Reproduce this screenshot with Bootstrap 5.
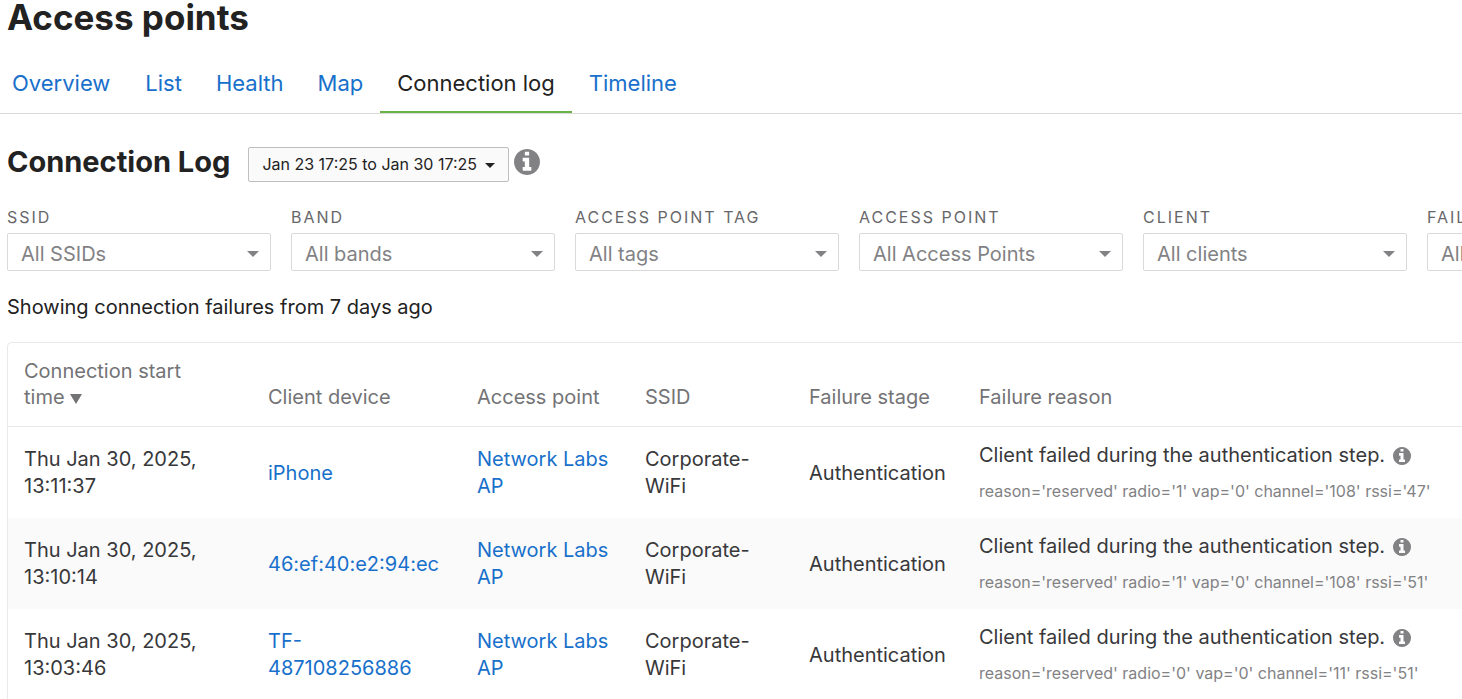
<!DOCTYPE html>
<html lang="en">
<head>
<meta charset="utf-8">
<meta name="viewport" content="width=device-width, initial-scale=1">
<title>Access points - Connection log</title>
<link href="https://cdn.jsdelivr.net/npm/bootstrap@5.3.0/dist/css/bootstrap.min.css" rel="stylesheet">
<style>
  body { font-family: Inter, "Liberation Sans", sans-serif; font-size: 20px; line-height: 27px; color: #222; overflow-x: hidden; }
  a { color: #1870cb; text-decoration: none; }
  h1 { font-size: 35px; line-height: 34px; font-weight: 700; padding: 0 7px; margin: 0 0 20px; }
  h2 { font-size: 29px; line-height: 36px; font-weight: 700; margin: 0 18px 0 0; }
  .page-tabs { border-bottom: 1px solid #d9d9d9; padding-left: 0; }
  .page-tabs .nav-link { font-size: 22px; line-height: 30px; padding: 14px 17px 13px; border-bottom: 2px solid transparent; color: #1870cb; }
  .page-tabs .nav-item:first-child .nav-link { padding-left: 12px; padding-right: 18px; }
  .page-tabs .nav-link.active { color: #222; border-bottom-color: #67b346; }
  .log-page { padding-left: 7px; }
  .log-heading { padding-top: 30px; }
  .range-btn { font-size: 16px; line-height: 24px; padding: 4px 13px 5px; margin-top: 3px; color: #222; background: #fafafa; border: 1px solid #bfbfc2; border-radius: 2px; }
  .range-btn.dropdown-toggle::after { border-width: 5px 5px 0; margin-left: 8px; vertical-align: 2px; }
  .info-icon { fill: #828285; flex: none; }
  .log-heading .info-icon { margin: 5px 0 0 5px; }
  .filter-row { gap: 20px; margin-top: 24px; }
  .filter-item { flex: 0 0 264px; }
  .filter-item label { display: block; font-size: 16px; line-height: 22px; letter-spacing: 2px; text-transform: uppercase; color: #67676a; margin-bottom: 5px; white-space: nowrap; }
  .filter-item .form-select { font-size: 20px; line-height: 26px; height: 38px; padding: 7px 36px 3px 13px; color: #828285; border: 1px solid #d9d9d9; border-radius: 2px;
    background-image: url("data:image/svg+xml,%3Csvg xmlns='http://www.w3.org/2000/svg' viewBox='0 0 12 6'%3E%3Cpath d='M0 0h12L6 6z' fill='%23828285'/%3E%3C/svg%3E"); background-size: 12px 6px; background-position: right 11px top 17px; }
  .summary { margin: 23px 0 21px; }
  .log-card { border: 1px solid #e9e9e9; border-right: 0; border-radius: 5px 0 0 0; }
  .log-table { table-layout: fixed; margin: 0; color: #38383a; }
  .log-table > :not(caption) > * > * { padding: 15px 16px; border: 0; background: transparent; color: inherit; box-shadow: none; }
  .log-table thead th { font-weight: 400; line-height: 26px; padding-bottom: 16px; color: #737376; vertical-align: bottom; border-bottom: 1px solid #e9e9e9; }
  .log-table tbody td { padding-top: 19px; padding-bottom: 18px; vertical-align: middle; }
  .log-table tbody td.reason { padding: 15px 16px; }
  .log-table tbody tr:nth-child(even) { background: #fafafa; }
  .reason small { display: block; font-size: 16px; line-height: 24px; margin-top: 10px; color: #828285; white-space: nowrap; }
  .reason .info-icon { margin-left: 8px; }
  .col-time { width: 244px; } .col-client { width: 209px; } .col-ap { width: 168px; } .col-ssid { width: 164px; } .col-stage { width: 170px; }
</style>
</head>
<body>
<svg class="d-none" aria-hidden="true"><symbol id="info" viewBox="0 128 1536 1536"><path d="M1024 1376v-160q0-14-9-23t-23-9h-96v-512q0-14-9-23t-23-9h-320q-14 0-23 9t-9 23v160q0 14 9 23t23 9h96v320h-96q-14 0-23 9t-9 23v160q0 14 9 23t23 9h448q14 0 23-9t9-23zm-128-896v-160q0-14-9-23t-23-9h-192q-14 0-23 9t-9 23v160q0 14 9 23t23 9h192q14 0 23-9t9-23zm640 416q0 209-103 385.5t-279.5 279.5-385.5 103-385.5-103-279.5-279.5-103-385.5 103-385.5 279.5-279.5 385.5-103 385.5 103 279.5 279.5 103 385.5z"/></symbol></svg>

<header>
  <h1>Access points</h1>
  <nav aria-label="Access points">
    <ul class="nav page-tabs flex-nowrap">
      <li class="nav-item"><a class="nav-link" href="#">Overview</a></li>
      <li class="nav-item"><a class="nav-link" href="#">List</a></li>
      <li class="nav-item"><a class="nav-link" href="#">Health</a></li>
      <li class="nav-item"><a class="nav-link" href="#">Map</a></li>
      <li class="nav-item"><a class="nav-link active" aria-current="page" href="#">Connection log</a></li>
      <li class="nav-item"><a class="nav-link" href="#">Timeline</a></li>
    </ul>
  </nav>
</header>

<main class="log-page">
  <div class="log-heading d-flex align-items-start">
    <h2>Connection Log</h2>
    <button type="button" class="btn range-btn dropdown-toggle">Jan 23 17:25 to Jan 30 17:25</button>
    <svg class="info-icon" width="26" height="26" aria-hidden="true"><use href="#info"/></svg>
  </div>

  <form class="filter-row d-flex overflow-hidden">
    <div class="filter-item"><label for="f-ssid">SSID</label><select id="f-ssid" class="form-select"><option>All SSIDs</option></select></div>
    <div class="filter-item"><label for="f-band">Band</label><select id="f-band" class="form-select"><option>All bands</option></select></div>
    <div class="filter-item"><label for="f-tag">Access point tag</label><select id="f-tag" class="form-select"><option>All tags</option></select></div>
    <div class="filter-item"><label for="f-ap">Access point</label><select id="f-ap" class="form-select"><option>All Access Points</option></select></div>
    <div class="filter-item"><label for="f-client">Client</label><select id="f-client" class="form-select"><option>All clients</option></select></div>
    <div class="filter-item"><label for="f-stage">Failure stage</label><select id="f-stage" class="form-select"><option>All stages</option></select></div>
  </form>

  <p class="summary">Showing connection failures from 7 days ago</p>

  <div class="log-card">
    <table class="table log-table">
      <colgroup><col class="col-time"><col class="col-client"><col class="col-ap"><col class="col-ssid"><col class="col-stage"><col></colgroup>
      <thead>
        <tr>
          <th scope="col" aria-sort="descending">Connection start<br>time <svg width="12" height="10" viewBox="0 0 12 10" fill="#737376" aria-hidden="true"><path d="M0 0h12L6 10z"/></svg></th>
          <th scope="col">Client device</th><th scope="col">Access point</th><th scope="col">SSID</th><th scope="col">Failure stage</th><th scope="col">Failure reason</th>
        </tr>
      </thead>
      <tbody>
        <tr>
          <td>Thu Jan 30, 2025, 13:11:37</td><td><a href="#">iPhone</a></td><td><a href="#">Network Labs AP</a></td><td>Corporate-WiFi</td><td>Authentication</td>
          <td class="reason"><div class="d-flex align-items-center text-nowrap">Client failed during the authentication step.<svg class="info-icon" width="18" height="18" aria-hidden="true"><use href="#info"/></svg></div><small>reason='reserved' radio='1' vap='0' channel='108' rssi='47'</small></td>
        </tr>
        <tr>
          <td>Thu Jan 30, 2025, 13:10:14</td><td><a href="#">46:ef:40:e2:94:ec</a></td><td><a href="#">Network Labs AP</a></td><td>Corporate-WiFi</td><td>Authentication</td>
          <td class="reason"><div class="d-flex align-items-center text-nowrap">Client failed during the authentication step.<svg class="info-icon" width="18" height="18" aria-hidden="true"><use href="#info"/></svg></div><small>reason='reserved' radio='1' vap='0' channel='108' rssi='51'</small></td>
        </tr>
        <tr>
          <td>Thu Jan 30, 2025, 13:03:46</td><td><a href="#">TF-487108256886</a></td><td><a href="#">Network Labs AP</a></td><td>Corporate-WiFi</td><td>Authentication</td>
          <td class="reason"><div class="d-flex align-items-center text-nowrap">Client failed during the authentication step.<svg class="info-icon" width="18" height="18" aria-hidden="true"><use href="#info"/></svg></div><small>reason='reserved' radio='0' vap='0' channel='11' rssi='51'</small></td>
        </tr>
      </tbody>
    </table>
  </div>
</main>
<script src="https://cdn.jsdelivr.net/npm/bootstrap@5.3.0/dist/js/bootstrap.bundle.min.js"></script>
</body>
</html>
